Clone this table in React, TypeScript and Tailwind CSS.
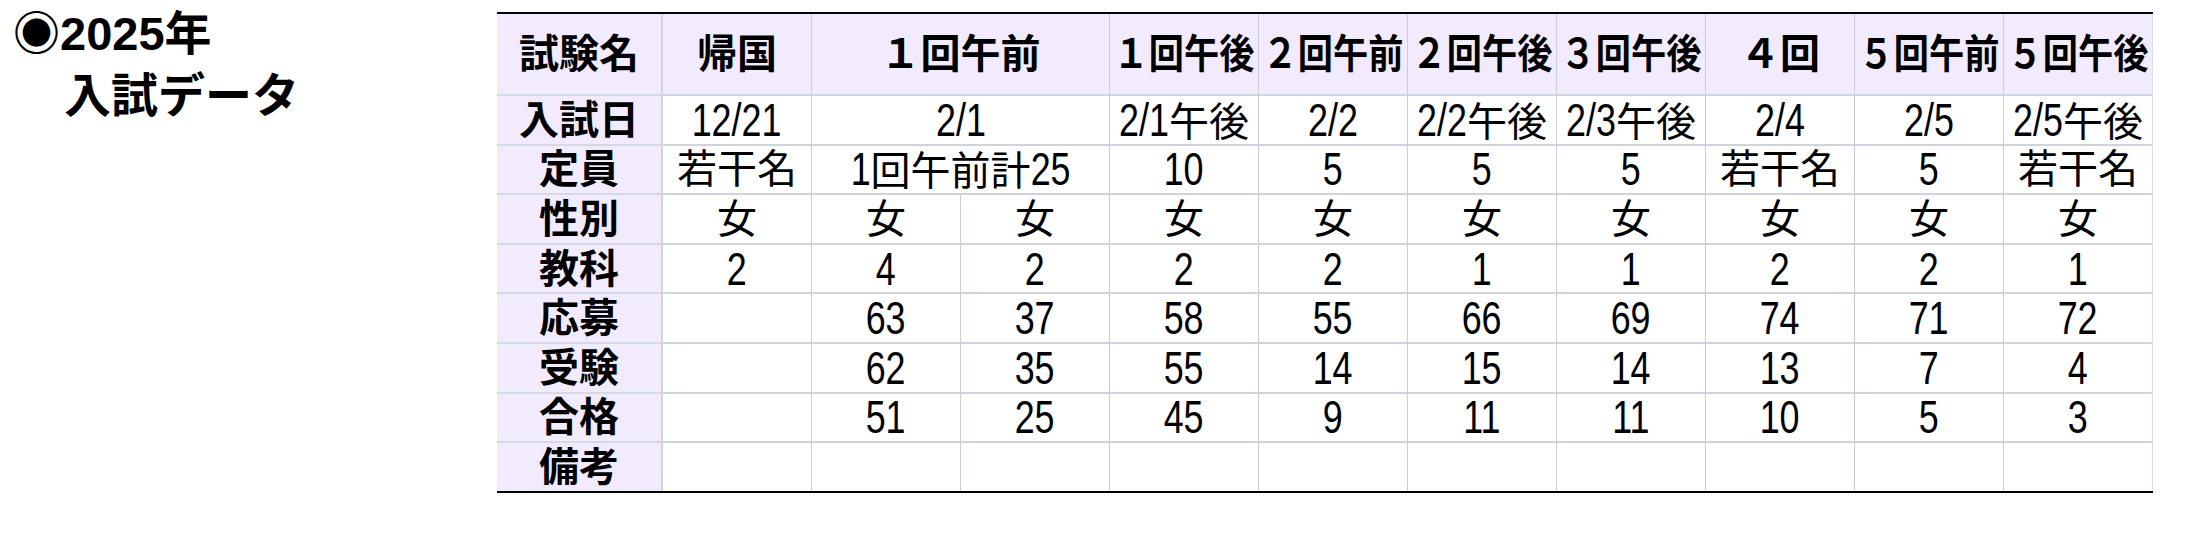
const FONT = { fontFamily: '"Liberation Sans", "Noto Sans CJK JP", sans-serif' };

type Cell = { text: string; span?: 2; squeeze?: boolean };

const header: Cell[] = [
  { text: "帰国" },
  { text: "１回午前", span: 2 },
  { text: "１回午後", squeeze: true },
  { text: "２回午前", squeeze: true },
  { text: "２回午後", squeeze: true },
  { text: "３回午後", squeeze: true },
  { text: "４回" },
  { text: "５回午前", squeeze: true },
  { text: "５回午後", squeeze: true },
];

const rows: { label: string; cells: Cell[] }[] = [
  {
    label: "入試日",
    cells: [
      { text: "12/21" },
      { text: "2/1", span: 2 },
      { text: "2/1午後" },
      { text: "2/2" },
      { text: "2/2午後" },
      { text: "2/3午後" },
      { text: "2/4" },
      { text: "2/5" },
      { text: "2/5午後" },
    ],
  },
  {
    label: "定員",
    cells: [
      { text: "若干名" },
      { text: "1回午前計25", span: 2 },
      { text: "10" },
      { text: "5" },
      { text: "5" },
      { text: "5" },
      { text: "若干名" },
      { text: "5" },
      { text: "若干名" },
    ],
  },
  { label: "性別", cells: Array.from({ length: 10 }, () => ({ text: "女" })) },
  { label: "教科", cells: ["2", "4", "2", "2", "2", "1", "1", "2", "2", "1"].map((t) => ({ text: t })) },
  { label: "応募", cells: ["", "63", "37", "58", "55", "66", "69", "74", "71", "72"].map((t) => ({ text: t })) },
  { label: "受験", cells: ["", "62", "35", "55", "14", "15", "14", "13", "7", "4"].map((t) => ({ text: t })) },
  { label: "合格", cells: ["", "51", "25", "45", "9", "11", "11", "10", "5", "3"].map((t) => ({ text: t })) },
  { label: "備考", cells: Array.from({ length: 10 }, () => ({ text: "" })) },
];

// the digits in the picture are tall and narrow: Liberation Sans at 46px squeezed to 0.78,
// with the freed width taken back by negative margins
const DIGIT_PX = 46;
const SQUEEZE = 0.78;

function runWidth(s: string) {
  let em = 0;
  for (const ch of s) em += ch === "/" ? 0.278 : 0.556;
  return em * DIGIT_PX;
}

function Mixed({ text }: { text: string }) {
  return (
    <>
      {text.split(/([0-9/]+)/).map((part, i) => {
        if (!part) return null;
        if (/^[0-9/]+$/.test(part)) {
          const gap = (-(1 - SQUEEZE) * runWidth(part)) / 2;
          return (
            <span
              key={i}
              className="inline-block text-[46px] leading-none scale-x-[0.78]"
              style={{ marginLeft: gap, marginRight: gap }}
            >
              {part}
            </span>
          );
        }
        return <span key={i}>{part}</span>;
      })}
    </>
  );
}

function LabelCell({ text, last }: { text: string; last?: boolean }) {
  return (
    <div
      className={
        "flex items-center justify-center bg-[#f1ebfd] border-r-2 border-r-[#cfd3dc] font-bold text-[40px] leading-none " +
        (last ? "" : "border-b-2 border-b-[#d6d8e2]")
      }
    >
      {text}
    </div>
  );
}

function DataCell({ cell, head, last, end }: { cell: Cell; head?: boolean; last?: boolean; end?: boolean }) {
  return (
    <div
      className={
        "flex items-center justify-center whitespace-nowrap text-[40px] leading-none " +
        (cell.span === 2 ? "col-span-2 " : "") +
        (head ? "bg-[#f1ebfd] font-semibold " : "") +
        (last ? "" : "border-b-2 border-b-[#cfd3dc] ") +
        (end ? "border-r border-r-[#dcdce6]" : "border-r border-r-[#c9cdd6]")
      }
    >
      {head ? (
        cell.squeeze ? (
          <span className="inline-block scale-x-[0.88]">{cell.text}</span>
        ) : (
          cell.text
        )
      ) : (
        <span className="flex items-baseline">
          <Mixed text={cell.text} />
        </span>
      )}
    </div>
  );
}

export default function App() {
  return (
    <div className="flex bg-white text-black w-[2210px] h-[560px]" style={FONT}>
      <div className="w-[497px] shrink-0 pt-[3px] pl-[13px] text-[47px] leading-[62px] font-semibold">
        <div>◉2025年</div>
        <div className="pl-[51px]">入試データ</div>
      </div>
      <div className="mt-[12px] self-start border-t-2 border-b-2 border-black">
        <div className="grid grid-cols-[166px_repeat(10,149px)] grid-rows-[82px_repeat(7,49.6px)_48px]">
          <LabelCell text="試験名" />
          {header.map((c, i) => (
            <DataCell key={i} cell={c} head end={i === header.length - 1} />
          ))}
          {rows.map((r, ri) => {
            const last = ri === rows.length - 1;
            return [
              <LabelCell key={r.label} text={r.label} last={last} />,
              ...r.cells.map((c, ci) => (
                <DataCell key={r.label + ci} cell={c} last={last} end={ci === r.cells.length - 1} />
              )),
            ];
          })}
        </div>
      </div>
    </div>
  );
}
